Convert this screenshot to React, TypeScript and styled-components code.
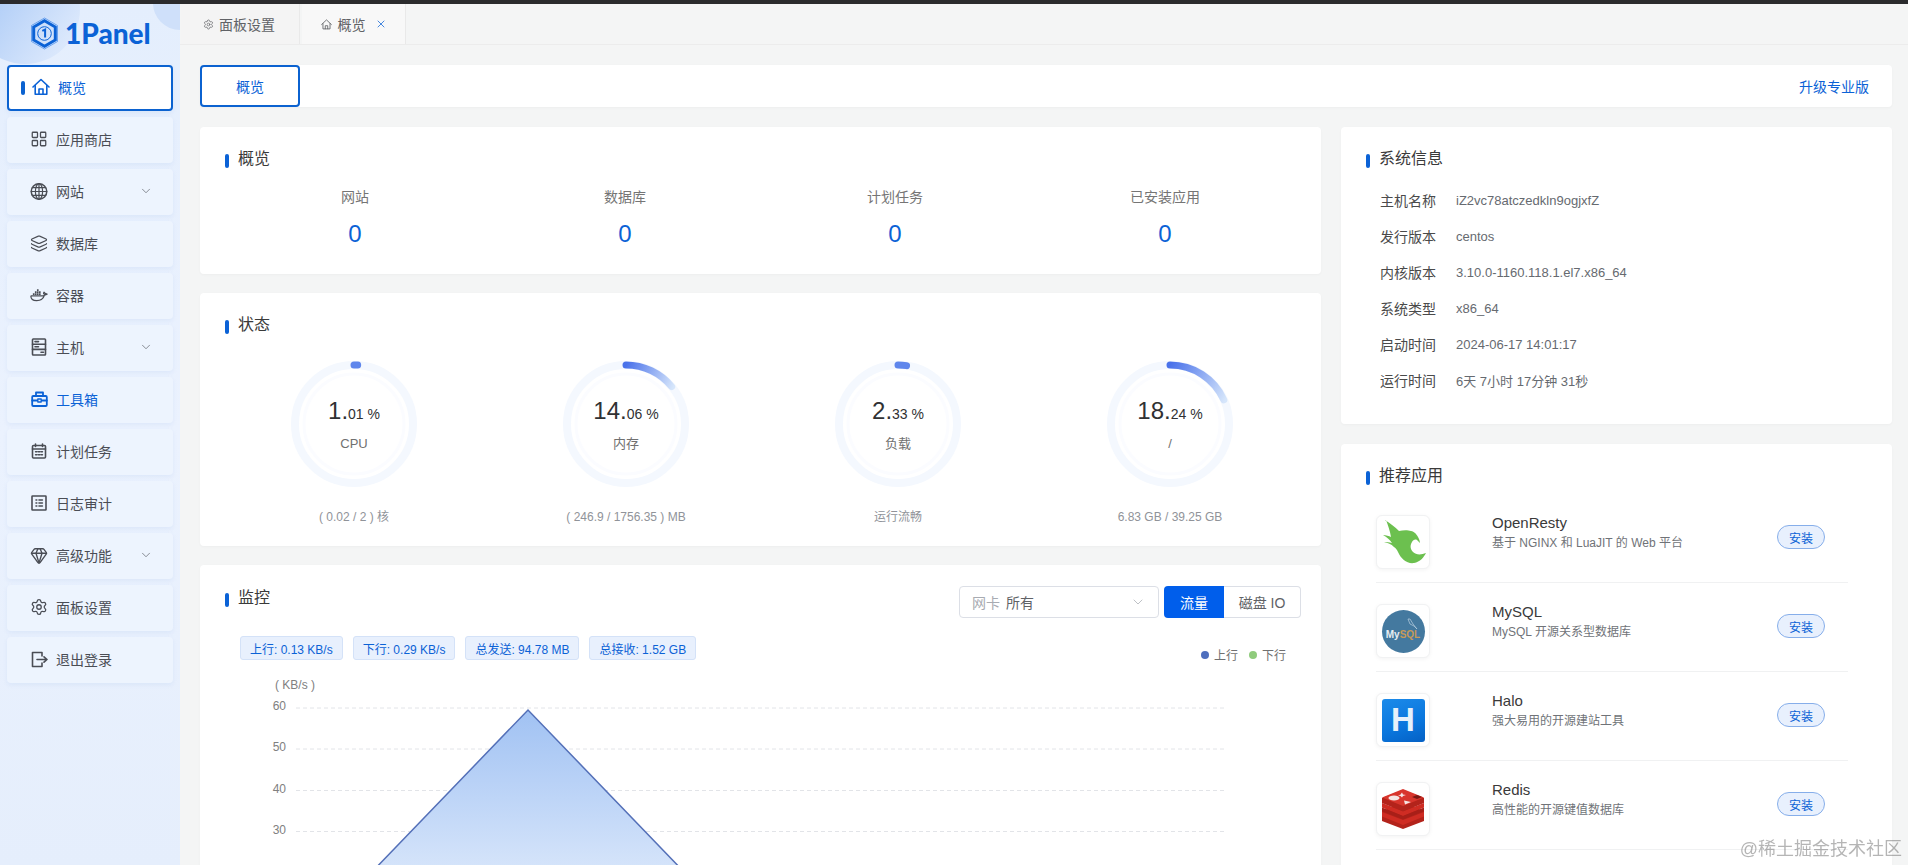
import React from 'react';
import styled, { createGlobalStyle } from 'styled-components';
import { ChevronDown, Gem, Layers, LayoutGrid, Settings, X } from 'lucide-react';

const GlobalStyle = createGlobalStyle`
  html, body {
    margin: 0;
    height: 100%;
    overflow: hidden;
    background: #f4f5f5;
    font-family: "Liberation Sans", "Noto Sans CJK SC", sans-serif;
  }
  * { box-sizing: border-box; }
`;

// --- 전체 레이아웃 ---
const TopStrip = styled.div`
  height: 4px;
  background: #2b2b2d;
`;

const Shell = styled.div`
  display: flex;
  height: 861px;
  overflow: hidden;
`;

const Sidebar = styled.aside`
  position: relative;
  width: 180px;
  flex-shrink: 0;
  overflow: hidden;
  padding: 0 7px;
  background: linear-gradient(180deg, #e4eefd 0%, #ebf2fe 50%, #e5eefc 100%);
`;

const CornerGlow = styled.div`
  position: absolute;
  left: -30px;
  top: -50px;
  width: 110px;
  height: 110px;
  border-radius: 50%;
  background: linear-gradient(125deg, #a9c9f6 20%, #dbe8fc 85%);
`;

const CornerDot = styled.div`
  position: absolute;
  left: 153px;
  top: -28px;
  width: 54px;
  height: 54px;
  border-radius: 50%;
  background: #cfe0fa;
`;

const LogoRow = styled.div`
  position: relative;
  height: 61px;
  display: flex;
  align-items: center;
  gap: 6px;
  padding: 0 0 3px 23px;
`;

const LogoText = styled.span`
  font-family: "Lato", "Liberation Sans", sans-serif;
  font-size: 28px;
  font-weight: 900;
  line-height: 1;
  color: #0b62d6;
`;

const Menu = styled.nav`
  position: relative;
  display: flex;
  flex-direction: column;
  gap: 6px;
`;

const MenuItem = styled.div<{ $active?: boolean; $current?: boolean }>`
  position: relative;
  height: 46px;
  display: flex;
  align-items: center;
  padding: 0 0 2px 23px;
  gap: 8px;
  border-radius: 4px;
  font-size: 14px;
  color: ${(p) => (p.$active || p.$current ? '#0b62d6' : '#4a4d55')};
  background: ${(p) => (p.$active ? '#fff' : '#edf4fe')};
  border: ${(p) => (p.$active ? '2px solid #0b62d0' : 'none')};
  box-shadow: 0 2px 4px rgba(160, 190, 235, 0.18);
`;

const ActiveMark = styled.span`
  position: absolute;
  left: 12px;
  top: 14px;
  width: 4px;
  height: 14px;
  border-radius: 2px;
  background: #0b62d0;
`;

const MenuArrow = styled(ChevronDown)`
  position: absolute;
  right: 20px;
  color: #5d6068;
`;

const IconBox = styled.span`
  width: 18px;
  height: 18px;
  display: flex;
  align-items: center;
  justify-content: center;
  flex-shrink: 0;
`;

const Main = styled.main`
  flex: 1;
  min-width: 0;
  display: flex;
  flex-direction: column;
`;

const TabBar = styled.div`
  height: 41px;
  display: flex;
  gap: 2px;
  padding-left: 1px;
  background: #f4f5f5;
  border-bottom: 1px solid #ececec;
`;

const Tab = styled.div<{ $active?: boolean }>`
  width: ${(p) => (p.$active ? '104px' : '119px')};
  height: 40px;
  display: flex;
  align-items: center;
  justify-content: center;
  gap: ${(p) => (p.$active ? '6px' : '5px')};
  padding-right: ${(p) => (p.$active ? '0' : '2px')};
  font-size: 14px;
  color: #606266;
  background: ${(p) => (p.$active ? '#f8f8f8' : '#f4f4f4')};
  border-right: 1px solid #e9e9e9;
`;

const TabClose = styled(X)`
  margin-left: 3px;
  color: #0b62d6;
`;

const Page = styled.div`
  flex: 1;
  padding: 20px 16px 0 20px;
  display: flex;
  flex-direction: column;
  gap: 20px;
  min-height: 0;
`;

const AppBar = styled.div`
  height: 42px;
  display: flex;
  align-items: center;
  justify-content: space-between;
  border-radius: 4px;
  background: #fff;
  box-shadow: 0 1px 3px rgba(0, 0, 0, 0.03);
`;

const AppBarTab = styled.div`
  width: 100px;
  height: 42px;
  display: flex;
  align-items: center;
  justify-content: center;
  border: 2px solid #0b62d0;
  border-radius: 4px;
  font-size: 14px;
  color: #0b62d6;
`;

const UpgradeLink = styled.span`
  margin-right: 23px;
  font-size: 14px;
  color: #0b62d6;
`;

const Columns = styled.div`
  display: flex;
  gap: 20px;
  align-items: flex-start;
`;

const LeftColumn = styled.div`
  width: 1121px;
  flex-shrink: 0;
  display: flex;
  flex-direction: column;
  gap: 19px;
`;

const RightColumn = styled.div`
  flex: 1;
  display: flex;
  flex-direction: column;
  gap: 20px;
`;

const Card = styled.section<{ $height: number }>`
  height: ${(p) => p.$height}px;
  border-radius: 4px;
  background: #fff;
  padding: 20px;
  box-shadow: 0 1px 3px rgba(0, 0, 0, 0.03);
`;

const TitleRow = styled.div`
  display: flex;
  align-items: center;
  gap: 9px;
  margin-top: 1px;
  padding-left: 5px;
  height: 22px;
`;

const TitleMark = styled.span`
  width: 4px;
  height: 14px;
  margin-top: 4px;
  border-radius: 2px;
  background: #0b62d6;
`;

const Title = styled.h3`
  margin: 0;
  font-size: 16px;
  font-weight: 400;
  line-height: 22px;
  color: #3a3a3a;
`;

// --- 개요 ---
const CountGrid = styled.div`
  display: grid;
  grid-template-columns: repeat(4, 270px);
  margin-top: 17px;
`;

const CountCell = styled.div`
  text-align: center;
`;

const CountLabel = styled.div`
  font-size: 14px;
  line-height: 20px;
  color: #757575;
`;

const CountValue = styled.div`
  margin-top: 12px;
  font-size: 24px;
  line-height: 30px;
  color: #0b62d6;
`;

// --- 상태 ---
const GaugeGrid = styled.div`
  display: grid;
  grid-template-columns: repeat(4, 272px);
  margin: 23px 0 0 -2px;
`;

const GaugeCell = styled.div`
  position: relative;
  display: flex;
  flex-direction: column;
  align-items: center;
`;

const GaugeCenter = styled.div`
  position: absolute;
  left: 0;
  right: 0;
  top: 37px;
  text-align: center;
`;

const GaugeValue = styled.div`
  font-size: 14px;
  line-height: 30px;
  color: #303133;
`;

const GaugeBig = styled.span`
  font-size: 24px;
`;

const GaugeLabel = styled.div`
  margin-top: 6px;
  font-size: 13px;
  line-height: 18px;
  color: #707070;
`;

const GaugeNote = styled.div`
  margin-top: 19px;
  font-size: 12px;
  line-height: 18px;
  color: #909399;
`;

// --- 모니터링 ---
const MonitorHead = styled.div`
  display: flex;
  align-items: flex-start;
  justify-content: space-between;
  margin-top: 1px;
`;

const MonitorTools = styled.div`
  display: flex;
  gap: 5px;
`;

const SelectBox = styled.div`
  width: 200px;
  height: 32px;
  display: flex;
  align-items: center;
  padding: 0 12px;
  gap: 6px;
  border: 1px solid #dcdfe6;
  border-radius: 4px;
  font-size: 14px;
  color: #606266;
`;

const SelectPrefix = styled.span`
  color: #a8abb2;
`;

const SelectArrow = styled(ChevronDown)`
  margin-left: auto;
  color: #b4b7bd;
`;

const ToggleGroup = styled.div`
  display: flex;
  height: 32px;
`;

const ToggleButton = styled.div<{ $on?: boolean; $width: number }>`
  width: ${(p) => p.$width}px;
  display: flex;
  align-items: center;
  justify-content: center;
  font-size: 14px;
  color: ${(p) => (p.$on ? '#fff' : '#606266')};
  background: ${(p) => (p.$on ? '#005eeb' : '#fff')};
  border: ${(p) => (p.$on ? 'none' : '1px solid #dcdfe6')};
  border-left: none;
  border-radius: ${(p) => (p.$on ? '4px 0 0 4px' : '0 4px 4px 0')};
`;

const StatRow = styled.div`
  display: flex;
  align-items: flex-start;
  justify-content: space-between;
  margin-top: 18px;
  padding: 0 15px 0 20px;
`;

const StatTags = styled.div`
  display: flex;
  gap: 10px;
`;

const StatTag = styled.span`
  height: 24px;
  padding: 0 9px;
  display: flex;
  align-items: center;
  border: 1px solid #d4e2f8;
  border-radius: 3px;
  background: #e8f0fd;
  font-size: 12px;
  color: #0b62d6;
`;

const Legend = styled.div`
  display: flex;
  align-items: center;
  margin-top: 10px;
  font-size: 12px;
  color: #707070;
`;

const LegendDot = styled.span<{ $color: string }>`
  width: 8px;
  height: 8px;
  margin: 0 5px 0 11px;
  border-radius: 50%;
  background: ${(p) => p.$color};
`;

const ChartSvg = styled.svg`
  display: block;
  margin: 13px 0 0 -20px;
`;

const AxisText = styled.text`
  font-size: 12px;
  fill: #808080;
`;

// --- 시스템 정보 ---
const InfoList = styled.div`
  margin-top: 12px;
  padding-left: 19px;
`;

const InfoRow = styled.div`
  display: flex;
  align-items: center;
  height: 36px;
  font-size: 14px;
`;

const InfoLabel = styled.span`
  width: 76px;
  color: #4a4a4a;
`;

const InfoValue = styled.span`
  font-size: 13px;
  color: #666a70;
`;

// --- 추천 앱 ---
const AppList = styled.div`
  margin: 7px 24px 0 15px;
`;

const AppRow = styled.div`
  height: 89px;
  display: flex;
  align-items: flex-start;
  padding-top: 21px;
  border-bottom: 1px solid #f0f1f2;
`;

const AppLogo = styled.div`
  width: 54px;
  height: 54px;
  flex-shrink: 0;
  display: flex;
  align-items: center;
  justify-content: center;
  border: 1px solid #f1f2f3;
  border-radius: 6px;
  box-shadow: 0 1px 4px rgba(0, 0, 0, 0.05);
  background: #fff;
`;

const AppText = styled.div`
  width: 285px;
  margin: -2px 0 0 62px;
`;

const AppName = styled.div`
  font-size: 15px;
  line-height: 20px;
  color: #3a3a3a;
`;

const AppDesc = styled.div`
  margin-top: 2px;
  font-size: 12px;
  line-height: 16px;
  color: #707378;
`;

const InstallButton = styled.div`
  width: 48px;
  height: 24px;
  margin-top: 10px;
  display: flex;
  align-items: center;
  justify-content: center;
  border: 1px solid #86aeea;
  border-radius: 12px;
  background: #e8f0fd;
  font-size: 12px;
  color: #0b62d6;
`;

const Watermark = styled.div`
  position: fixed;
  right: 6px;
  bottom: 4px;
  font-size: 18px;
  line-height: 24px;
  color: rgba(90, 90, 90, 0.45);
`;

// --- 아이콘 ---
const stroke = { fill: 'none', stroke: 'currentColor', strokeWidth: 1.6, strokeLinejoin: 'round', strokeLinecap: 'round' } as const;

const HomeIcon = ({ size = 18, width = 1.6 }: { size?: number; width?: number }) => (
  <svg width={size} height={size} viewBox="0 0 18 18" {...stroke} strokeWidth={width}>
    <path d="M1 9 9 1.5 17 9" />
    <path d="M3.2 7.5V16.2h11.6V7.5" />
    <path d="M7 16v-5h4v5" />
  </svg>
);

const GlobeIcon = () => (
  <svg width="19" height="19" viewBox="0 0 19 19" {...stroke} strokeWidth={1.3}>
    <circle cx="9.5" cy="9.5" r="8.2" strokeWidth={1.6} />
    <ellipse cx="9.5" cy="9.5" rx="3.8" ry="8.2" />
    <path d="M9.5 1.3v16.4M1.3 9.5h16.4M2.5 5.5h14M2.5 13.5h14" />
  </svg>
);

const DockerIcon = () => (
  <svg width="22" height="18" viewBox="0 0 22 18">
    <path
      d="M1 10h15c1 0 1.7-.5 2-1.400 1 .3 2.200.2 3-.6-.7-.6-1.600-.8-2.400-.6-.3-.9-.8-1.400-1.400-1.800-.6.8-.7 1.800-.3 2.600M1 10c0 3.700 2.600 6 7.200 6 4.800 0 8.200-2.400 9.800-7.400"
      fill="none"
      stroke="currentColor"
      strokeWidth="1.5"
      strokeLinejoin="round"
    />
    <path d="M3.5 7h2v2h-2zM6 7h2v2H6zM8.5 7h2v2h-2zM11 7h2v2h-2zM6 4.5h2v2H6zM8.5 4.5h2v2h-2zM11 4.5h2v2h-2zM8.5 2h2v2h-2z" fill="currentColor" />
  </svg>
);

const HostIcon = () => (
  <svg width="16" height="18" viewBox="0 0 16 18" {...stroke}>
    <rect x="1.5" y="1" width="13" height="16" rx="0.8" />
    <path d="M1.5 6.2h13M1.5 11.4h13M4 3.6h3.5M4 8.8h3.5M10 14.2h2.5" />
  </svg>
);

const ToolboxIcon = () => (
  <svg width="17" height="16" viewBox="0 0 17 16" {...stroke} strokeWidth={1.8}>
    <rect x="1.2" y="5" width="14.6" height="10" rx="1" />
    <path d="M5 5V1.5h7V5M1.2 9.5h5M10.8 9.5h5" />
    <rect x="6.8" y="8" width="3.4" height="3" strokeWidth={1.3} />
  </svg>
);

const CalendarIcon = () => (
  <svg width="16" height="16" viewBox="0 0 16 16" {...stroke}>
    <rect x="1.5" y="2.5" width="13" height="12.5" rx="1" />
    <path d="M1.5 6h13M4.5 1v2.5M11.5 1v2.5" />
    <path d="M4.5 8.8h1.5M7.3 8.8h1.5M10 8.8h1.5M4.5 11.8h1.5M7.3 11.8h1.5M10 11.8h1.5" strokeWidth={1.4} />
  </svg>
);

const LogIcon = () => (
  <svg width="16" height="16" viewBox="0 0 16 16" {...stroke}>
    <rect x="1" y="1" width="14" height="14" rx="0.5" />
    <path d="M5 5h.8M8 5h3.4M5 8h.8M8 8h3.4M5 11h.8M8 11h3.4" />
  </svg>
);

const ExitIcon = () => (
  <svg width="17" height="17" viewBox="0 0 17 17" {...stroke}>
    <path d="M11 1.5H1.500v14H11M11 5V1.500M11 15.500V12M6 8.500h10M13 5.800l3 2.700-3 2.700" />
  </svg>
);

const GearSmall = styled(Settings)`
  color: #606266;
`;

const LogoMark = () => (
  <svg width="29" height="33" viewBox="0 0 29 33">
    <path d="M14.5 1 27.5 8.5v16L14.5 32 1.5 24.5v-16z" fill="none" stroke="#3f86e8" strokeWidth="0.7" />
    <path d="M14.5 3.7 25.3 10v13L14.5 29.3 3.7 23V10z" fill="none" stroke="#0b62d6" strokeWidth="3" />
    <circle cx="14.5" cy="16.5" r="6.8" fill="none" stroke="#0b62d6" strokeWidth="1" />
    <path d="M12.3 13.8 15.1 12.5V20.5" fill="none" stroke="#0b62d6" strokeWidth="2" />
  </svg>
);

const OpenRestyLogo = () => (
  <svg width="52" height="52" viewBox="7 7 52 52">
    <path
      d="M15 11c5 3 10 7 14 11 4-1 9-1 12 0 3 .5 6 3 8 8 .5 1.500 1 3 1 4l-3-3c-2-1-4 0-5 2-2 3-2 7 1 10 3 3 8 3 13 1-2 4-6 9-12 10-7 1-13-4-16-11-1-2-2-4-4-5-3-3-6-4-10-5 3 0 5 0 8 1-2-3-5-6-9-8 3 0 6 1 8 2-1-6-3-12-5-17z"
      fill="#6cc04f"
    />
  </svg>
);

const MysqlCircle = styled.div`
  position: relative;
  width: 43px;
  height: 43px;
  border-radius: 50%;
  background: #44799f;
  display: flex;
  align-items: center;
  justify-content: center;
  padding-top: 7px;
  font-size: 10px;
  font-weight: 700;
  color: #e8eef3;
`;

const MysqlAccent = styled.span`
  color: #c79a58;
`;

const MysqlDolphin = styled.svg`
  position: absolute;
  right: 5px;
  top: 8px;
`;

const HaloSquare = styled.div`
  width: 43px;
  height: 43px;
  border-radius: 3px;
  background: linear-gradient(160deg, #1c8bea 0%, #0a76dd 60%, #0560c4 100%);
  display: flex;
  align-items: center;
  justify-content: center;
  font-size: 33px;
  font-weight: 700;
  color: #e6f1fb;
`;

const RedisLogo = () => (
  <svg width="44" height="40" viewBox="0 0 44 40">
    <path d="M22 14 43 22v10L22 40 1 32V22z" fill="#b3231b" />
    <path d="M22 22 43 14v4.5L22 27 1 18.5V14z" fill="#cf2c23" />
    <path d="M22 27 43 18.5V22l-21 8.5L1 22v-3.5z" fill="#a81f18" />
    <path d="M22 31 43 23v4.5L22 36 1 27.5V23z" fill="#cf2c23" />
    <path d="M22 1 43 9v5L22 22.5 1 14V9z" fill="#b3231b" />
    <path d="M22 0 43 8.5 22 17 1 8.5z" fill="#d8352c" />
    <ellipse cx="13" cy="9" rx="5.5" ry="2.5" fill="#f5e6e4" />
    <path d="M23 11.5 30 13l-6 2.5z" fill="#f5e6e4" />
    <path d="M21 3.500l1 2 3 .5-3 1-1 1.500-1.500-1.500-2.500-.5 2.300-.8z" fill="#f5e6e4" />
    <path d="M31 8l5-2 5 2-5 2z" fill="#7a1712" />
  </svg>
);

// --- 데이터 ---
const menu = [
  { label: '应用商店', icon: <LayoutGrid size={18} strokeWidth={1.7} /> },
  { label: '网站', icon: <GlobeIcon />, arrow: true },
  { label: '数据库', icon: <Layers size={19} strokeWidth={1.6} /> },
  { label: '容器', icon: <DockerIcon /> },
  { label: '主机', icon: <HostIcon />, arrow: true },
  { label: '工具箱', icon: <ToolboxIcon />, current: true },
  { label: '计划任务', icon: <CalendarIcon /> },
  { label: '日志审计', icon: <LogIcon /> },
  { label: '高级功能', icon: <Gem size={19} strokeWidth={1.8} />, arrow: true },
  { label: '面板设置', icon: <Settings size={18} strokeWidth={1.7} /> },
  { label: '退出登录', icon: <ExitIcon /> },
];

const counts = ['网站', '数据库', '计划任务', '已安装应用'];

const gauges = [
  { whole: '1', rest: '01', percent: 1.01, label: 'CPU', note: '( 0.02 / 2 ) 核' },
  { whole: '14', rest: '06', percent: 14.06, label: '内存', note: '( 246.9 / 1756.35 ) MB' },
  { whole: '2', rest: '33', percent: 2.33, label: '负载', note: '运行流畅' },
  { whole: '18', rest: '24', percent: 18.24, label: '/', note: '6.83 GB / 39.25 GB' },
];

const stats = ['上行: 0.13 KB/s', '下行: 0.29 KB/s', '总发送: 94.78 MB', '总接收: 1.52 GB'];

const info = [
  ['主机名称', 'iZ2vc78atczedkln9ogjxfZ'],
  ['发行版本', 'centos'],
  ['内核版本', '3.10.0-1160.118.1.el7.x86_64'],
  ['系统类型', 'x86_64'],
  ['启动时间', '2024-06-17 14:01:17'],
  ['运行时间', '6天 7小时 17分钟 31秒'],
];

const apps = [
  {
    name: 'OpenResty',
    desc: '基于 NGINX 和 LuaJIT 的 Web 平台',
    logo: <OpenRestyLogo />,
  },
  {
    name: 'MySQL',
    desc: 'MySQL 开源关系型数据库',
    logo: (
      <MysqlCircle>
        <MysqlDolphin width="14" height="14" viewBox="0 0 14 14" fill="none" stroke="#b9cfe0" strokeWidth="0.7">
          <path d="M2 1h2l3 5 4 5-3-3-4-2z" />
        </MysqlDolphin>
        My<MysqlAccent>SQL</MysqlAccent>
      </MysqlCircle>
    ),
  },
  { name: 'Halo', desc: '强大易用的开源建站工具', logo: <HaloSquare>H</HaloSquare> },
  { name: 'Redis', desc: '高性能的开源键值数据库', logo: <RedisLogo /> },
];

const Gauge = ({ percent, id }: { percent: number; id: string }) => {
  const radius = 59;
  const length = 2 * Math.PI * radius;
  const arc = Math.max((percent / 100) * length, 1);
  const angle = (percent / 100) * 2 * Math.PI;
  // 호의 시작점에서 끝점까지 그라데이션
  const endX = 65 + radius * Math.cos(angle);
  const endY = 65 + radius * Math.sin(angle);
  return (
    <svg width="130" height="130" viewBox="0 0 130 130">
      <defs>
        <linearGradient id={id} gradientUnits="userSpaceOnUse" x1="124" y1="65" x2={endX} y2={endY + 2}>
          <stop offset="0%" stopColor="#4a72ea" />
          <stop offset="100%" stopColor="#d6e6fb" />
        </linearGradient>
      </defs>
      <circle cx="65" cy="65" r={radius} fill="none" stroke="#f4f8fe" strokeWidth="8" />
      <circle cx="65" cy="65" r="50" fill="none" stroke="#fbfcff" strokeWidth="3" />
      <circle
        cx="65"
        cy="65"
        r={radius}
        fill="none"
        stroke={percent < 5 ? '#5f86ec' : `url(#${id})`}
        strokeWidth="7"
        strokeLinecap="round"
        strokeDasharray={`${arc} ${length}`}
        transform="rotate(-90 65 65)"
      />
    </svg>
  );
};

const gridLines = [
  { label: '60', y: 32 },
  { label: '50', y: 73 },
  { label: '40', y: 114.5 },
  { label: '30', y: 155.5 },
];

export default function App() {
  return (
    <>
      <GlobalStyle />
      <TopStrip />
      <Shell>
        <Sidebar>
          <CornerGlow />
          <CornerDot />
          <LogoRow>
            <LogoMark />
            <LogoText>1Panel</LogoText>
          </LogoRow>
          <Menu>
            <MenuItem $active>
              <ActiveMark />
              <IconBox>
                <HomeIcon />
              </IconBox>
              概览
            </MenuItem>
            {menu.map((item) => (
              <MenuItem key={item.label} $current={item.current}>
                <IconBox>{item.icon}</IconBox>
                {item.label}
                {item.arrow && <MenuArrow size={14} strokeWidth={1.2} />}
              </MenuItem>
            ))}
          </Menu>
        </Sidebar>

        <Main>
          <TabBar>
            <Tab>
              <GearSmall size={11} strokeWidth={1.5} />
              面板设置
            </Tab>
            <Tab $active>
              <HomeIcon size={11} width={1.4} />
              概览
              <TabClose size={12} strokeWidth={1.5} />
            </Tab>
          </TabBar>

          <Page>
            <AppBar>
              <AppBarTab>概览</AppBarTab>
              <UpgradeLink>升级专业版</UpgradeLink>
            </AppBar>

            <Columns>
              <LeftColumn>
                <Card $height={147}>
                  <TitleRow>
                    <TitleMark />
                    <Title>概览</Title>
                  </TitleRow>
                  <CountGrid>
                    {counts.map((label) => (
                      <CountCell key={label}>
                        <CountLabel>{label}</CountLabel>
                        <CountValue>0</CountValue>
                      </CountCell>
                    ))}
                  </CountGrid>
                </Card>

                <Card $height={253}>
                  <TitleRow>
                    <TitleMark />
                    <Title>状态</Title>
                  </TitleRow>
                  <GaugeGrid>
                    {gauges.map((g, i) => (
                      <GaugeCell key={g.label}>
                        <Gauge percent={g.percent} id={`gauge${i}`} />
                        <GaugeCenter>
                          <GaugeValue>
                            <GaugeBig>{g.whole}.</GaugeBig>
                            {g.rest} %
                          </GaugeValue>
                          <GaugeLabel>{g.label}</GaugeLabel>
                        </GaugeCenter>
                        <GaugeNote>{g.note}</GaugeNote>
                      </GaugeCell>
                    ))}
                  </GaugeGrid>
                </Card>

                <Card $height={400}>
                  <MonitorHead>
                    <TitleRow>
                      <TitleMark />
                      <Title>监控</Title>
                    </TitleRow>
                    <MonitorTools>
                      <SelectBox>
                        <SelectPrefix>网卡</SelectPrefix>
                        所有
                        <SelectArrow size={16} strokeWidth={1.3} />
                      </SelectBox>
                      <ToggleGroup>
                        <ToggleButton $on $width={60}>
                          流量
                        </ToggleButton>
                        <ToggleButton $width={77}>磁盘 IO</ToggleButton>
                      </ToggleGroup>
                    </MonitorTools>
                  </MonitorHead>
                  <StatRow>
                    <StatTags>
                      {stats.map((s) => (
                        <StatTag key={s}>{s}</StatTag>
                      ))}
                    </StatTags>
                    <Legend>
                      <LegendDot $color="#4f6fbe" />
                      上行
                      <LegendDot $color="#8fcb7c" />
                      下行
                    </Legend>
                  </StatRow>
                  <ChartSvg width="1121" height="280" viewBox="0 0 1121 280">
                    <defs>
                      <linearGradient id="trafficFill" x1="0" y1="35" x2="0" y2="280" gradientUnits="userSpaceOnUse">
                        <stop offset="0%" stopColor="#a1c2f3" />
                        <stop offset="100%" stopColor="#f2f7fe" />
                      </linearGradient>
                    </defs>
                    <AxisText x="75" y="13">( KB/s )</AxisText>
                    {gridLines.map((line) => (
                      <g key={line.label}>
                        <line x1="96" x2="1024" y1={line.y} y2={line.y} stroke="#e2e4e8" strokeDasharray="4 3" />
                        <AxisText x="86" y={line.y + 2} textAnchor="end">
                          {line.label}
                        </AxisText>
                      </g>
                    ))}
                    <path d="M91 280 328 34 565 280z" fill="url(#trafficFill)" />
                    <path d="M91 280 328 34 565 280" fill="none" stroke="#5470b8" strokeWidth="1.5" />
                  </ChartSvg>
                </Card>
              </LeftColumn>

              <RightColumn>
                <Card $height={297}>
                  <TitleRow>
                    <TitleMark />
                    <Title>系统信息</Title>
                  </TitleRow>
                  <InfoList>
                    {info.map(([label, value]) => (
                      <InfoRow key={label}>
                        <InfoLabel>{label}</InfoLabel>
                        <InfoValue>{value}</InfoValue>
                      </InfoRow>
                    ))}
                  </InfoList>
                </Card>

                <Card $height={430}>
                  <TitleRow>
                    <TitleMark />
                    <Title>推荐应用</Title>
                  </TitleRow>
                  <AppList>
                    {apps.map((app) => (
                      <AppRow key={app.name}>
                        <AppLogo>{app.logo}</AppLogo>
                        <AppText>
                          <AppName>{app.name}</AppName>
                          <AppDesc>{app.desc}</AppDesc>
                        </AppText>
                        <InstallButton>安装</InstallButton>
                      </AppRow>
                    ))}
                  </AppList>
                </Card>
              </RightColumn>
            </Columns>
          </Page>
        </Main>
      </Shell>
      <Watermark>@稀土掘金技术社区</Watermark>
    </>
  );
}
